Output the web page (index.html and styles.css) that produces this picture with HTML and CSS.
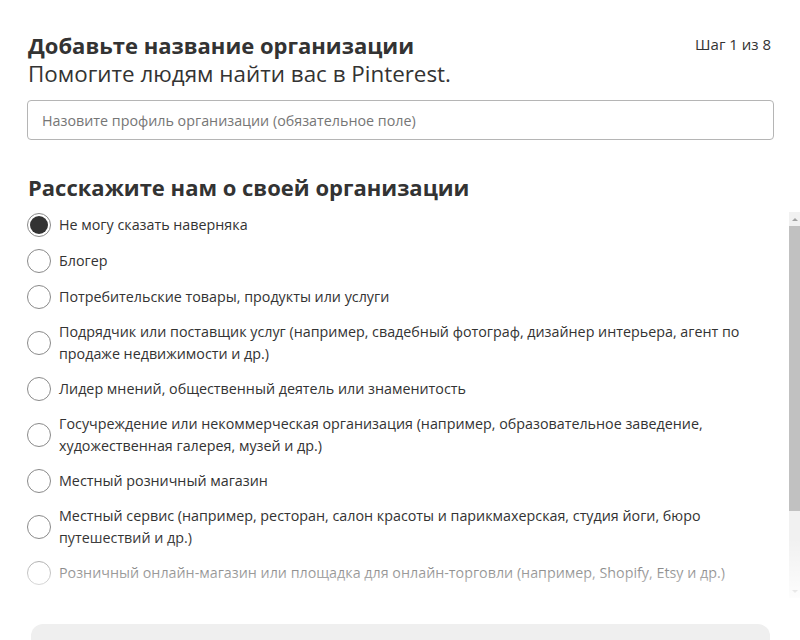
FILE: index.html
```html
<!DOCTYPE html>
<html lang="ru">
<head>
    <meta charset="UTF-8">
    <title>Pinterest — организация</title>
    <link rel="stylesheet" href="styles.css">
</head>
<body>
    <div class="page">
        <div class="top">
            <div>
                <h1>Добавьте название организации</h1>
                <p class="sub">Помогите людям найти вас в Pinterest.</p>
            </div>
            <div class="step">Шаг 1 из 8</div>
        </div>
        <input class="name" type="text" placeholder="Назовите профиль организации (обязательное поле)">

        <h2>Расскажите нам о своей организации</h2>
        <div class="list-wrap">
            <div class="list">
                <label class="opt"><input type="radio" name="kind" checked><span class="dot"></span><span class="txt">Не могу сказать наверняка</span></label>
                <label class="opt"><input type="radio" name="kind"><span class="dot"></span><span class="txt">Блогер</span></label>
                <label class="opt"><input type="radio" name="kind"><span class="dot"></span><span class="txt">Потребительские товары, продукты или услуги</span></label>
                <label class="opt"><input type="radio" name="kind"><span class="dot"></span><span class="txt">Подрядчик или поставщик услуг (например, свадебный фотограф, дизайнер интерьера, агент по продаже недвижимости и др.)</span></label>
                <label class="opt"><input type="radio" name="kind"><span class="dot"></span><span class="txt">Лидер мнений, общественный деятель или знаменитость</span></label>
                <label class="opt"><input type="radio" name="kind"><span class="dot"></span><span class="txt">Госучреждение или некоммерческая организация (например, образовательное заведение, художественная галерея, музей и др.)</span></label>
                <label class="opt"><input type="radio" name="kind"><span class="dot"></span><span class="txt">Местный розничный магазин</span></label>
                <label class="opt"><input type="radio" name="kind"><span class="dot"></span><span class="txt">Местный сервис (например, ресторан, салон красоты и парикмахерская, студия йоги, бюро путешествий и др.)</span></label>
                <label class="opt"><input type="radio" name="kind"><span class="dot"></span><span class="txt">Розничный онлайн-магазин или площадка для онлайн-торговли (например, Shopify, Etsy и др.)</span></label>
            </div>
            <div class="sbar">
                <div class="arrow up"></div>
                <div class="track"><div class="thumb"></div></div>
                <div class="arrow down"></div>
            </div>
            <div class="fade"></div>
        </div>
        <div class="next"></div>
    </div>
</body>
</html>
```

FILE: styles.css
```css
body {
    margin: 0;
    font-family: "Open Sans", "Noto Sans", sans-serif;
    color: #333;
    background: #fff;
    overflow: hidden;
}
.page {
    padding: 30px 26px 0 27px;
}
.top {
    display: flex;
    justify-content: space-between;
    align-items: flex-start;
}
h1 {
    margin: 0;
    font-size: 22px;
    font-weight: 700;
    line-height: 30px;
    padding-left: 1px;
}
.sub {
    margin: 0;
    font-size: 22.4px;
    line-height: 28px;
    padding-left: 1px;
}
.step {
    font-size: 15px;
    padding-top: 4px;
    margin-right: 3px;
}
.name {
    display: block;
    box-sizing: border-box;
    width: 100%;
    height: 40px;
    margin-top: 12px;
    border: 1px solid #b5b5b5;
    border-radius: 4px;
    padding: 0 14px;
    font-family: inherit;
    font-size: 14.3px;
    color: #333;
}
.name::placeholder {
    color: #767676;
}
h2 {
    margin: 32px 0 0;
    font-size: 22px;
    font-weight: 700;
    line-height: 30px;
    padding-left: 1px;
}
.list-wrap {
    position: relative;
    display: flex;
    margin-right: -26px;
    margin-top: 4px;
    height: 392px;
}
.list {
    flex: 1;
    overflow: hidden;
    display: flex;
    flex-direction: column;
    gap: 12px;
    padding-top: 7px;
}
.sbar {
    width: 11px;
    display: flex;
    flex-direction: column;
    background: #f1f1f1;
    margin-top: 6px;
}
.arrow {
    height: 14px;
    display: flex;
    align-items: center;
    justify-content: center;
}
.arrow::before {
    content: "";
    border-left: 3px solid transparent;
    border-right: 3px solid transparent;
}
.arrow.up::before {
    border-bottom: 3px solid #a3a3a3;
}
.arrow.down::before {
    border-top: 3px solid #a3a3a3;
}
.track {
    flex: 1;
}
.thumb {
    height: 285px;
    background: #c1c1c1;
}
.opt {
    display: flex;
    align-items: center;
    min-height: 24px;
    padding-right: 40px;
    cursor: pointer;
    flex-shrink: 0;
}
.opt input {
    display: none;
}
.dot {
    flex: none;
    width: 22px;
    height: 22px;
    border: 1px solid #8a8a8a;
    border-radius: 50%;
    margin-right: 8px;
    position: relative;
}
.opt input:checked + .dot::after {
    content: "";
    position: absolute;
    left: 2px;
    top: 2px;
    width: 18px;
    height: 18px;
    border-radius: 50%;
    background: #333;
}
.txt {
    font-size: 14.3px;
    line-height: 22px;
}
.fade {
    position: absolute;
    left: 0;
    right: 0;
    bottom: 0;
    height: 60px;
    background: linear-gradient(rgba(255,255,255,0), rgba(255,255,255,0.85));
    pointer-events: none;
}
.next {
    margin: 26px 4px 0 4px;
    height: 40px;
    background: #efefef;
    border-radius: 12px;
}
```
